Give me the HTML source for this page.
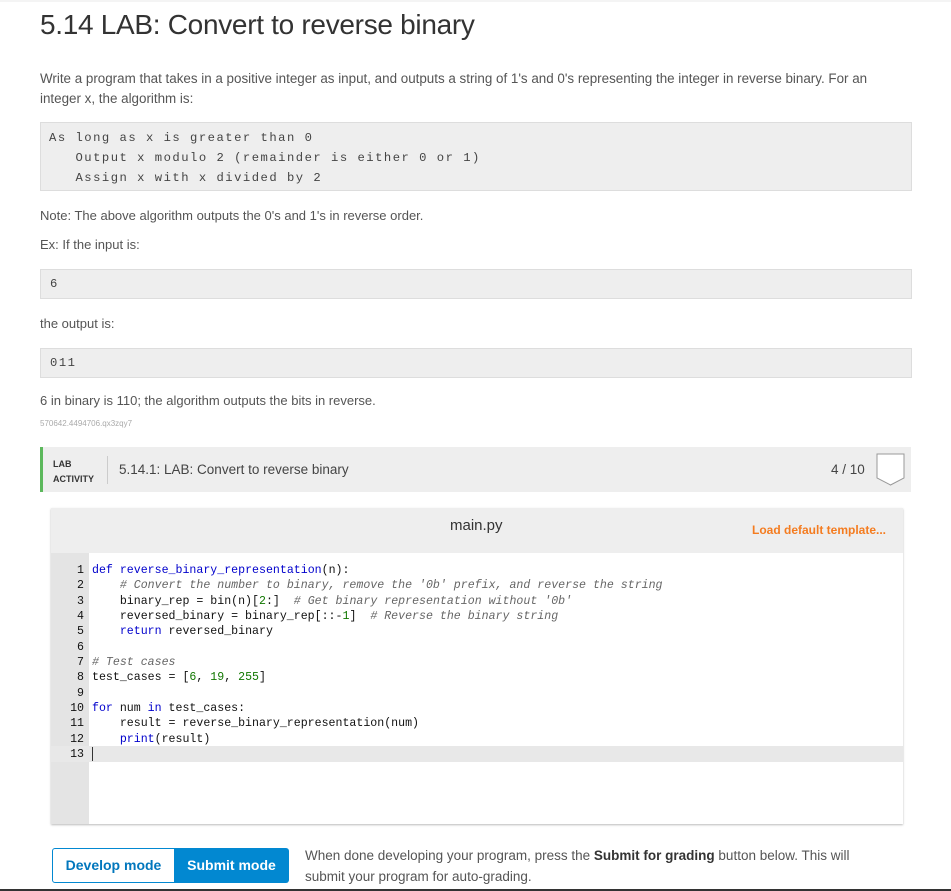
<!DOCTYPE html>
<html><head><style>
body{margin:0;width:951px;height:891px;overflow:hidden;background:#fff;font-family:"Liberation Sans",sans-serif;color:#555;position:relative}
.a{position:absolute}
h1{position:absolute;left:40px;top:9px;margin:0;font-weight:normal;font-size:28px;color:#333;letter-spacing:-0.3px}
p{margin:0;font-size:13px;color:#555;position:absolute;left:40px}
.box{position:absolute;left:40px;width:870px;background:#eee;border:1px solid #ddd;font-family:"Liberation Mono",monospace;color:#444}
.box pre{font-size:12.2px;letter-spacing:1.5px}
pre{margin:0;font-family:"Liberation Mono",monospace}
.code{font-size:11.6px;line-height:15.35px;color:#111;position:absolute;left:92px;top:563px;white-space:pre}
.ln{font-size:11.6px;line-height:15.35px;color:#111;position:absolute;left:52px;width:32px;top:563px;text-align:right;white-space:pre}
.k{color:#0000cc}.c{color:#666;font-style:italic}.n{color:#117700}
</style></head><body>
<div class="a" style="left:0;top:0;width:951px;height:2px;background:#f4f4f4"></div>
<h1>5.14 LAB: Convert to reverse binary</h1>
<p style="top:69px;line-height:20px;width:860px;font-size:13.4px">Write a program that takes in a positive integer as input, and outputs a string of 1's and 0's representing the integer in reverse binary. For an integer x, the algorithm is:</p>
<div class="box" style="top:122px;height:67px"><pre style="position:absolute;left:8px;top:5px;line-height:20px">As long as x is greater than 0
   Output x modulo 2 (remainder is either 0 or 1)
   Assign x with x divided by 2</pre></div>
<p style="top:208px">Note: The above algorithm outputs the 0's and 1's in reverse order.</p>
<p style="top:237px">Ex: If the input is:</p>
<div class="box" style="top:269px;height:28px"><pre style="position:absolute;left:9px;top:7px">6</pre></div>
<p style="top:316px">the output is:</p>
<div class="box" style="top:348px;height:28px"><pre style="position:absolute;left:9px;top:7px">011</pre></div>
<p style="top:393px">6 in binary is 110; the algorithm outputs the bits in reverse.</p>
<p style="top:419px;font-size:8px;color:#aaa">570642.4494706.qx3zqy7</p>

<div class="a" style="left:40px;top:447px;width:871px;height:45px;background:#eee;border-left:3px solid #5cb85c;box-sizing:border-box"></div>
<div class="a" style="left:53px;top:457px;font-size:9px;font-weight:bold;color:#333;line-height:15px">LAB<br>ACTIVITY</div>
<div class="a" style="left:107px;top:456px;width:1px;height:28px;background:#ccc"></div>
<div class="a" style="left:119px;top:462px;font-size:13.5px;color:#444">5.14.1: LAB: Convert to reverse binary</div>
<div class="a" style="left:831px;top:462px;font-size:13.5px;color:#444">4 / 10</div>
<svg class="a" style="left:876px;top:453px" width="30" height="34"><path d="M1 1H28V25L14.5 32L1 25Z" fill="#fff" stroke="#999" stroke-width="1"/></svg>

<div class="a" style="left:51px;top:508px;width:852px;height:316px;background:#eee;box-shadow:0 1px 2px #bbb"></div>
<div class="a" style="left:450px;top:517px;font-size:15px;color:#333">main.py</div>
<div class="a" style="left:752px;top:523px;font-size:12px;font-weight:bold;color:#f47c20">Load default template...</div>
<div class="a" style="left:89px;top:553px;width:814px;height:271px;background:#fff"></div>
<div class="a" style="left:51px;top:553px;width:38px;height:271px;background:#e4e4e4"></div>
<div class="a" style="left:51px;top:746px;width:852px;height:16px;background:#e8e8e8"></div>
<div class="a" style="left:92px;top:747px;width:1px;height:14px;background:#333"></div>
<pre class="ln">1
2
3
4
5
6
7
8
9
10
11
12
13</pre>
<pre class="code"><span class="k">def</span> <span class="k">reverse_binary_representation</span>(n):
    <span class="c"># Convert the number to binary, remove the '0b' prefix, and reverse the string</span>
    binary_rep = bin(n)[<span class="n">2</span>:]  <span class="c"># Get binary representation without '0b'</span>
    reversed_binary = binary_rep[::-<span class="n">1</span>]  <span class="c"># Reverse the binary string</span>
    <span class="k">return</span> reversed_binary

<span class="c"># Test cases</span>
test_cases = [<span class="n">6</span>, <span class="n">19</span>, <span class="n">255</span>]

<span class="k">for</span> num <span class="k">in</span> test_cases:
    result = reverse_binary_representation(num)
    <span class="k">print</span>(result)
</pre>

<div class="a" style="left:52px;top:848px;width:121px;height:33px;border:1px solid #0288d1;border-radius:3px 0 0 3px;color:#0277bd;font-weight:bold;font-size:14px;line-height:33px;text-align:center">Develop mode</div>
<div class="a" style="left:174px;top:848px;width:115px;height:35px;background:#0288d1;border-radius:0 3px 3px 0;color:#fff;font-weight:bold;font-size:14px;line-height:35px;text-align:center">Submit mode</div>
<div class="a" style="left:305px;top:845px;width:570px;font-size:13.5px;line-height:21px;color:#555">When done developing your program, press the <b style="color:#333">Submit for grading</b> button below. This will submit your program for auto-grading.</div>
<div class="a" style="left:0;top:889px;width:951px;height:2px;background:#333"></div>
</body></html>
